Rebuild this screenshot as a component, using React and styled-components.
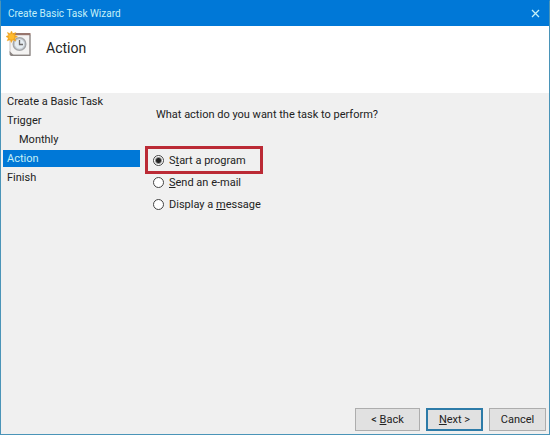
import React, { useState } from "react";
import styled, { createGlobalStyle, css } from "styled-components";

const GlobalStyle = createGlobalStyle`
  * {
    box-sizing: border-box;
  }

  body {
    margin: 0;
    color: #222;
    font-family: Roboto, "Open Sans", sans-serif;
    font-size: 11px;
    line-height: 17px;
  }
`;

const steps = [
  { name: "Create a Basic Task" },
  { name: "Trigger" },
  { name: "Monthly", nested: true },
  { name: "Action" },
  { name: "Finish" },
];

const actions = [
  { id: "program", before: "S", hotkey: "t", after: "art a program" },
  { id: "email", before: "", hotkey: "S", after: "end an e-mail" },
  { id: "message", before: "Display a ", hotkey: "m", after: "essage" },
];

const TaskIcon = () => (
  <svg width="26" height="26" viewBox="0 0 26 26" aria-hidden="true">
    <path d="M4 3H24V24H4Z" fill="#f4f3f2" stroke="#c9c4c2" />
    <path d="M5 24.4H24V4" fill="none" stroke="#8b8583" strokeWidth="1.2" />
    <path d="M7 2H24.5V4.2H7Z" fill="#98766d" />
    <path d="M3.5 20L8 24.5H4Z" fill="#8b8583" />
    <circle cx="13.5" cy="13" r="7" fill="#a3a5a8" />
    <circle cx="13.5" cy="13" r="5.2" fill="#e6edf2" stroke="#c5cbd0" />
    <path d="M13.5 9V13.5H17" fill="none" stroke="#6d6a68" strokeWidth="1.3" />
    <path
      d="M5.5 0L6.8 2.7L9.8 1.5L8.7 4.3L11.5 5.8L8.7 7L9.8 10L6.8 8.8L5.3 11.5L4.2 8.8L1.2 9.8L2.4 7L0 5.5L2.6 4.3L1.4 1.4L4.2 2.7Z"
      fill="#f0a51f"
      stroke="#f0a51f"
      strokeWidth="0.5"
    />
    <circle cx="5.5" cy="5.7" r="2.8" fill="#ffbb2e" />
  </svg>
);

const App = () => {
  const [action, setAction] = useState("program");

  return (
    <>
      <GlobalStyle />
      <Wizard>
        <TitleBar>
          <span>Create Basic Task Wizard</span>
          <CloseButton type="button" aria-label="Close">
            <svg width="9" height="9" viewBox="0 0 9 9">
              <path
                d="M1 1L8 8M8 1L1 8"
                stroke="currentColor"
                strokeWidth="1.3"
              />
            </svg>
          </CloseButton>
        </TitleBar>
        <Header>
          <TaskIcon />
          <Heading>Action</Heading>
        </Header>
        <Body>
          <StepList>
            {steps.map(({ name, nested }) => (
              <Step
                key={name}
                $nested={nested}
                $active={name === "Action"}
                aria-current={name === "Action" ? "step" : undefined}
              >
                {name}
              </Step>
            ))}
          </StepList>
          <Question>
            <Legend>What action do you want the task to perform?</Legend>
            <Options>
              {actions.map(({ id, before, hotkey, after }) => (
                <Option key={id} $marked={id === "program"}>
                  <Radio
                    type="radio"
                    name="action"
                    checked={action === id}
                    onChange={() => setAction(id)}
                  />
                  <span>
                    {before}
                    <u>{hotkey}</u>
                    {after}
                  </span>
                </Option>
              ))}
            </Options>
          </Question>
        </Body>
        <Footer>
          <Button type="button" $wide>
            &lt; <u>B</u>ack
          </Button>
          <Button type="button" $primary>
            <u>N</u>ext &gt;
          </Button>
          <Button type="button">Cancel</Button>
        </Footer>
      </Wizard>
    </>
  );
};

const Wizard = styled.main`
  display: flex;
  flex-direction: column;
  min-height: 100vh;
  border: 1px solid #4a94b8;
  border-top-color: #0078d7;
  background-color: #f0f0f0;
`;

const TitleBar = styled.div`
  display: flex;
  align-items: center;
  justify-content: space-between;
  height: 25px;
  padding: 0 7px;
  background-color: #0078d7;
  color: #c4f0f8;
  font-size: 10px;
`;

const CloseButton = styled.button`
  display: flex;
  padding: 2px;
  border: none;
  background: none;
  color: #c4f0f8;
`;

const Header = styled.header`
  display: flex;
  align-items: flex-start;
  gap: 14px;
  height: 67px;
  padding: 5px;
  background-color: #fff;
`;

const Heading = styled.h1`
  margin: 7px 0 0;
  font-size: 14px;
  font-weight: 400;
  line-height: 20px;
`;

const Body = styled.div`
  display: flex;
  flex: 1;
`;

const StepList = styled.ol`
  display: flex;
  flex: 0 0 142px;
  flex-direction: column;
  gap: 2px;
  margin: 0;
  padding: 0 3px 0 2px;
  list-style: none;
`;

const Step = styled.li`
  height: 17px;
  padding-left: ${({ $nested }) => ($nested ? "16px" : "4px")};
  ${({ $active }) =>
    $active &&
    css`
      background-color: #0078d7;
      color: #c4f0f8;
    `}
`;

const Question = styled.fieldset`
  flex: 1;
  min-width: 0;
  margin: 0;
  padding: 13px 0 0 5px;
  border: none;
`;

const Legend = styled.legend`
  float: left;
  width: 100%;
  padding: 0 0 0 8px;
`;

const Options = styled.div`
  display: flex;
  clear: both;
  flex-direction: column;
  align-items: flex-start;
  padding-top: 26px;
`;

const Option = styled.label`
  display: flex;
  align-items: center;
  gap: 5px;
  height: 22px;
  padding: 0 5px;

  ${({ $marked }) =>
    $marked &&
    css`
      width: 112px;
      outline: 3px solid #bb2a35;
    `}
`;

const Radio = styled.input`
  appearance: none;
  width: 11px;
  height: 11px;
  margin: 0;
  border: 1px solid #444;
  border-radius: 50%;
  background-color: #fff;

  &:checked {
    background: radial-gradient(circle, #222 0 2px, #fff 4px);
  }
`;

const Footer = styled.footer`
  display: flex;
  justify-content: flex-end;
  gap: 6px;
  padding: 3px;
`;

const Button = styled.button`
  width: ${({ $wide }) => ($wide ? "65px" : "57px")};
  height: 23px;
  padding: 0;
  border: ${({ $primary }) =>
    $primary ? "2px solid #2d7ba8" : "1px solid #adadad"};
  background-color: #e1e1e1;
  color: inherit;
  font: inherit;
`;

export default App;
